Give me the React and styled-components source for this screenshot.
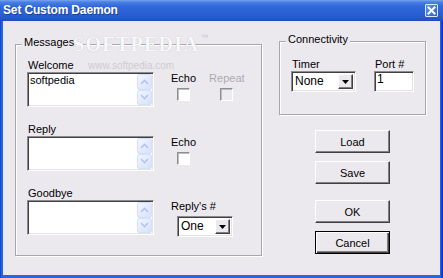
import React from 'react';
import styled, { createGlobalStyle } from 'styled-components';

const FACE = '#ECE9EE';
const FONT = '"Liberation Sans", Arial, sans-serif';

const Global = createGlobalStyle`
  html, body { margin: 0; padding: 0; background: ${FACE}; }
  body { font-family: ${FONT}; font-size: 11px; color: #000; }
  * { box-sizing: border-box; }
`;

const Window = styled.div`
  position: relative;
  width: 443px;
  height: 278px;
  display: flex;
  flex-direction: column;
  overflow: hidden;
  background: linear-gradient(to right, #0831D9 0, #1C5BE0 1px, #2A66E4 2px, #2A66E4 440px, #1C5BE0 441px, #0831D9 442px);
`;

const TitleBar = styled.div`
  flex: none;
  height: 21px;
  display: flex;
  align-items: center;
  justify-content: space-between;
  padding: 0 5px 0 3px;
  background: linear-gradient(to bottom, #7AA5F0 0%, #4A80E6 10%, #3169DA 30%, #2A61D4 60%, #2659CC 85%, #1E4EBC 100%);
`;

const Title = styled.span`
  color: #fff;
  font: bold 12px ${FONT};
  letter-spacing: -0.15px;
  line-height: 21px;
  text-shadow: 1px 1px 0 rgba(10, 25, 90, 0.45);
`;

const CloseBtn = styled.div`
  width: 13px;
  height: 13px;
  display: flex;
  align-items: center;
  justify-content: center;
  border: 1px solid #DDE7FB;
  border-radius: 1px;
  background: linear-gradient(135deg, #5E90EE, #2A62D8);
`;

const Client = styled.div`
  flex: 1;
  display: flex;
  align-items: flex-start;
  gap: 17px;
  margin: 0 3px 3px 3px;
  padding-left: 12px;
  background: ${FACE};
`;

const GroupBox = styled.div`
  position: relative;
  flex: none;
  width: ${(p) => p.$w}px;
  margin-top: ${(p) => p.$top}px;
  padding: ${(p) => p.$pad};
  border: 1px solid #A7A6AB;
  box-shadow: inset 1px 1px 0 #fff, 1px 1px 0 #fff;
`;

const Legend = styled.span`
  position: absolute;
  left: 6px;
  top: -9px;
  padding: 0 2px;
  line-height: 13px;
  background: ${FACE};
  white-space: nowrap;
`;

const Rows = styled.div`
  display: flex;
  flex-direction: column;
  gap: 16px;
`;

const MsgRow = styled.div`
  display: flex;
  align-items: flex-start;
  gap: 17px;
`;

const Field = styled.div`
  display: flex;
  flex-direction: column;
  align-items: flex-start;
  gap: ${(p) => p.$gap || 0}px;
`;

const Label = styled.div`
  line-height: 13px;
  padding-left: ${(p) => (p.$indent ? 1 : 0)}px;
  white-space: nowrap;
  color: ${(p) => (p.$disabled ? '#ACA9B0' : '#000')};
`;

const Edit = styled.div`
  width: ${(p) => p.$w}px;
  height: ${(p) => p.$h}px;
  display: flex;
  padding: 1px;
  background: #fff;
  border: 1px solid;
  border-color: #8C8C90 #fff #fff #8C8C90;
  box-shadow: inset 1px 1px 0 #404040, inset -1px -1px 0 #E3E3E6;
`;

const EditText = styled.div`
  flex: 1;
  padding: 0 1px;
  line-height: 13px;
  font-size: ${(p) => p.$size || 11}px;
  white-space: nowrap;
`;

const ScrollCol = styled.div`
  width: 15px;
  display: flex;
  flex-direction: column;
`;

const ScrollBtn = styled.div`
  flex: 1;
  display: flex;
  align-items: center;
  justify-content: center;
  border: 1px solid #D6E1F9;
  border-radius: 2px;
  background: linear-gradient(135deg, #F2F6FE 0%, #E0E9FD 60%, #D6E2FB 100%);
`;

const Options = styled.div`
  display: flex;
  gap: 13px;
  margin-top: 13px;
`;

const CheckCol = styled.div`
  display: flex;
  flex-direction: column;
  align-items: center;
  gap: 3px;
`;

const Checkbox = styled.span`
  display: block;
  width: 13px;
  height: 13px;
  background: ${(p) => (p.$disabled ? '#ECEBEE' : '#fff')};
  border: 1px solid;
  border-color: #8E8E92 #fff #fff #8E8E92;
  box-shadow: inset 1px 1px 0 #BDBCC0;
`;

const Combo = styled.div`
  width: ${(p) => p.$w}px;
  height: 21px;
  margin-left: ${(p) => p.$indent || 0}px;
  display: flex;
  padding: 2px;
  background: #fff;
  border: 1px solid;
  border-color: #8C8C90 #fff #fff #8C8C90;
  box-shadow: inset 1px 1px 0 #404040, inset -1px -1px 0 #E3E3E6;
`;

const ComboText = styled.div`
  flex: 1;
  padding-left: 1px;
  line-height: 15px;
  font-size: 12px;
`;

const DropBtn = styled.div`
  width: 15px;
  display: flex;
  align-items: center;
  justify-content: center;
  background: ${FACE};
  border: 1px solid;
  border-color: #fff #404040 #404040 #fff;
  box-shadow: inset -1px -1px 0 #808080;
`;

const RightCol = styled.div`
  flex: none;
  width: 147px;
  display: flex;
  flex-direction: column;
  align-items: center;
`;

const ConnRow = styled.div`
  display: flex;
  gap: 18px;
`;

const Button = styled.button`
  width: 75px;
  height: 23px;
  margin-top: ${(p) => p.$mt}px;
  padding: 0;
  font: 11px ${FONT};
  color: #000;
  background: ${FACE};
  border: 1px solid;
  border-color: ${(p) => (p.$default ? '#000' : '#fff #404040 #404040 #fff')};
  box-shadow: ${(p) =>
    p.$default
      ? 'inset 1px 1px 0 #fff, inset -1px -1px 0 #404040, inset -2px -2px 0 #808080'
      : 'inset -1px -1px 0 #808080'};
`;

const Watermark = styled.div`
  position: absolute;
  left: 73px;
  top: 33px;
  font: bold 20px "Liberation Serif", serif;
  letter-spacing: 1.3px;
  color: #F8F8FA;
  text-shadow: 0 0 1px #C4C3C9, 0 0 1px #D0CFD4;
  pointer-events: none;
  & sup { font-size: 8px; vertical-align: top; margin-left: 1px; font-family: ${FONT}; font-weight: normal; color: #C9C8CD; text-shadow: none; }
`;

const WatermarkUrl = styled.div`
  position: absolute;
  left: 88px;
  top: 60px;
  font: 10px ${FONT};
  color: #CDCBD1;
  pointer-events: none;
`;

const Up = () => (
  <svg width="9" height="6" viewBox="0 0 9 6">
    <polyline points="1,5 4.5,1.5 8,5" fill="none" stroke="#B3C5EE" strokeWidth="1.6" />
  </svg>
);
const Down = () => (
  <svg width="9" height="6" viewBox="0 0 9 6">
    <polyline points="1,1 4.5,4.5 8,1" fill="none" stroke="#B3C5EE" strokeWidth="1.6" />
  </svg>
);
const Tri = () => (
  <svg width="7" height="4" viewBox="0 0 7 4">
    <polygon points="0,0 7,0 3.5,4" fill="#000" />
  </svg>
);

const TextBox = ({ children }) => (
  <Edit $w={127} $h={35}>
    <EditText>{children}</EditText>
    <ScrollCol>
      <ScrollBtn><Up /></ScrollBtn>
      <ScrollBtn><Down /></ScrollBtn>
    </ScrollCol>
  </Edit>
);

const Select = ({ value, w, indent }) => (
  <Combo $w={w} $indent={indent}>
    <ComboText>{value}</ComboText>
    <DropBtn><Tri /></DropBtn>
  </Combo>
);

const Check = ({ label, disabled }) => (
  <CheckCol>
    <Label $disabled={disabled}>{label}</Label>
    <Checkbox $disabled={disabled} />
  </CheckCol>
);

export default function App() {
  return (
    <>
      <Global />
      <Window>
        <TitleBar>
          <Title>Set Custom Daemon</Title>
          <CloseBtn>
            <svg width="9" height="9" viewBox="0 0 9 9">
              <path d="M1.5 1.5 L7.5 7.5 M7.5 1.5 L1.5 7.5" stroke="#fff" strokeWidth="2" strokeLinecap="square" />
            </svg>
          </CloseBtn>
        </TitleBar>
        <Client>
          <GroupBox $w={247} $top={23} $pad="14px 0 18px 11px">
            <Legend>Messages</Legend>
            <Rows>
              <MsgRow>
                <Field>
                  <Label $indent>Welcome</Label>
                  <TextBox>softpedia</TextBox>
                </Field>
                <Options>
                  <Check label="Echo" />
                  <Check label="Repeat" disabled />
                </Options>
              </MsgRow>
              <MsgRow>
                <Field>
                  <Label $indent>Reply</Label>
                  <TextBox />
                </Field>
                <Options>
                  <Check label="Echo" />
                </Options>
              </MsgRow>
              <MsgRow>
                <Field>
                  <Label $indent>Goodbye</Label>
                  <TextBox />
                </Field>
                <Options>
                  <Field $gap={3}>
                    <Label>Reply's #</Label>
                    <Select value="One" w={56} indent={6} />
                  </Field>
                </Options>
              </MsgRow>
            </Rows>
          </GroupBox>
          <RightCol>
            <GroupBox $w={147} $top={20} $pad="16px 0 22px 11px">
              <Legend>Connectivity</Legend>
              <ConnRow>
                <Field>
                  <Label $indent>Timer</Label>
                  <Select value="None" w={65} />
                </Field>
                <Field>
                  <Label $indent>Port #</Label>
                  <Edit $w={40} $h={21}>
                    <EditText $size={12}>1</EditText>
                  </Edit>
                </Field>
              </ConnRow>
            </GroupBox>
            <Button $mt={15}>Load</Button>
            <Button $mt={8}>Save</Button>
            <Button $mt={16}>OK</Button>
            <Button $mt={8} $default>Cancel</Button>
          </RightCol>
        </Client>
        <Watermark>SOFTPEDIA<sup>™</sup></Watermark>
        <WatermarkUrl>www.softpedia.com</WatermarkUrl>
      </Window>
    </>
  );
}
